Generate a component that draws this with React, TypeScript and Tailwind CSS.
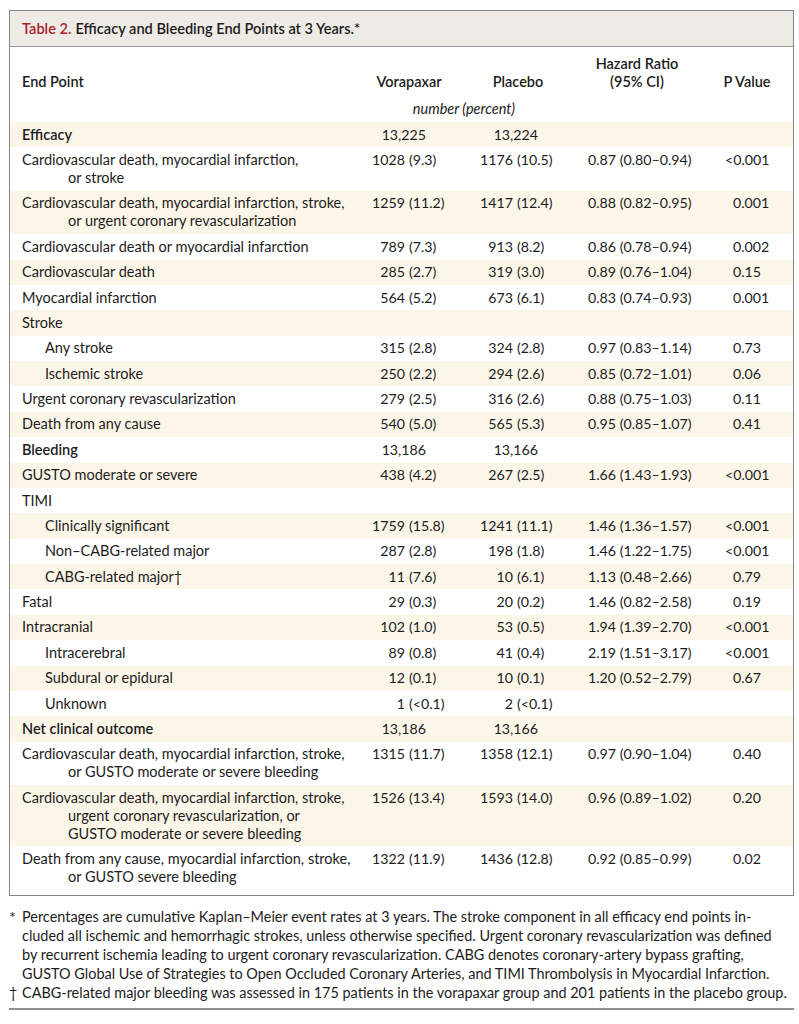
import React from "react"

type Row = {
  label: string[]
  bold?: boolean
  indent?: boolean
  v?: string
  p?: string
  hr?: string
  pv?: string
}

const rows: Row[] = [
  { label: ["Efficacy"], bold: true, v: "13,225", p: "13,224" },
  { label: ["Cardiovascular death, myocardial infarction,", "or stroke"], v: "1028 (9.3)", p: "1176 (10.5)", hr: "0.87 (0.80–0.94)", pv: "<0.001" },
  { label: ["Cardiovascular death, myocardial infarction, stroke,", "or urgent coronary revascularization"], v: "1259 (11.2)", p: "1417 (12.4)", hr: "0.88 (0.82–0.95)", pv: "0.001" },
  { label: ["Cardiovascular death or myocardial infarction"], v: "789 (7.3)", p: "913 (8.2)", hr: "0.86 (0.78–0.94)", pv: "0.002" },
  { label: ["Cardiovascular death"], v: "285 (2.7)", p: "319 (3.0)", hr: "0.89 (0.76–1.04)", pv: "0.15" },
  { label: ["Myocardial infarction"], v: "564 (5.2)", p: "673 (6.1)", hr: "0.83 (0.74–0.93)", pv: "0.001" },
  { label: ["Stroke"] },
  { label: ["Any stroke"], indent: true, v: "315 (2.8)", p: "324 (2.8)", hr: "0.97 (0.83–1.14)", pv: "0.73" },
  { label: ["Ischemic stroke"], indent: true, v: "250 (2.2)", p: "294 (2.6)", hr: "0.85 (0.72–1.01)", pv: "0.06" },
  { label: ["Urgent coronary revascularization"], v: "279 (2.5)", p: "316 (2.6)", hr: "0.88 (0.75–1.03)", pv: "0.11" },
  { label: ["Death from any cause"], v: "540 (5.0)", p: "565 (5.3)", hr: "0.95 (0.85–1.07)", pv: "0.41" },
  { label: ["Bleeding"], bold: true, v: "13,186", p: "13,166" },
  { label: ["GUSTO moderate or severe"], v: "438 (4.2)", p: "267 (2.5)", hr: "1.66 (1.43–1.93)", pv: "<0.001" },
  { label: ["TIMI"] },
  { label: ["Clinically significant"], indent: true, v: "1759 (15.8)", p: "1241 (11.1)", hr: "1.46 (1.36–1.57)", pv: "<0.001" },
  { label: ["Non–CABG-related major"], indent: true, v: "287 (2.8)", p: "198 (1.8)", hr: "1.46 (1.22–1.75)", pv: "<0.001" },
  { label: ["CABG-related major†"], indent: true, v: "11 (7.6)", p: "10 (6.1)", hr: "1.13 (0.48–2.66)", pv: "0.79" },
  { label: ["Fatal"], v: "29 (0.3)", p: "20 (0.2)", hr: "1.46 (0.82–2.58)", pv: "0.19" },
  { label: ["Intracranial"], v: "102 (1.0)", p: "53 (0.5)", hr: "1.94 (1.39–2.70)", pv: "<0.001" },
  { label: ["Intracerebral"], indent: true, v: "89 (0.8)", p: "41 (0.4)", hr: "2.19 (1.51–3.17)", pv: "<0.001" },
  { label: ["Subdural or epidural"], indent: true, v: "12 (0.1)", p: "10 (0.1)", hr: "1.20 (0.52–2.79)", pv: "0.67" },
  { label: ["Unknown"], indent: true, v: "1 (<0.1)", p: "2 (<0.1)" },
  { label: ["Net clinical outcome"], bold: true, v: "13,186", p: "13,166" },
  { label: ["Cardiovascular death, myocardial infarction, stroke,", "or GUSTO moderate or severe bleeding"], v: "1315 (11.7)", p: "1358 (12.1)", hr: "0.97 (0.90–1.04)", pv: "0.40" },
  { label: ["Cardiovascular death, myocardial infarction, stroke,", "urgent coronary revascularization, or", "GUSTO moderate or severe bleeding"], v: "1526 (13.4)", p: "1593 (14.0)", hr: "0.96 (0.89–1.02)", pv: "0.20" },
  { label: ["Death from any cause, myocardial infarction, stroke,", "or GUSTO severe bleeding"], v: "1322 (11.9)", p: "1436 (12.8)", hr: "0.92 (0.85–0.99)", pv: "0.02" },
]

// count like "1028 (9.3)" -> number right-aligned, parenthesis hanging to the right
const CountCell = ({ value, numW, totalW }: { value?: string; numW: string; totalW: string }) => {
  if (!value) return <div className={totalW} />
  const i = value.indexOf(" (")
  if (i < 0) {
    return (
      <div className={totalW}>
        <div className={numW === "w-[40px]" ? "w-[61px] text-right" : "w-[68px] text-right"}>{value}</div>
      </div>
    )
  }
  return (
    <div className={`${totalW} flex`}>
      <span className={`${numW} text-right shrink-0`}>{value.slice(0, i)}</span>
      <span className="ml-[4px] whitespace-nowrap">{value.slice(i + 1)}</span>
    </div>
  )
}

const PCell = ({ value }: { value?: string }) => (
  <div className="w-[73px] pl-[13px] whitespace-nowrap">
    {value?.startsWith("<") ? (
      <>
        <span className="-ml-[8px]">&lt;</span>
        {value.slice(1)}
      </>
    ) : (
      value
    )}
  </div>
)

export default function App() {
  return (
    <div
      className="w-[799px] h-[1024px] bg-white text-[#1c1c1c] overflow-hidden"
      style={{ fontFamily: "Lato, 'Open Sans', sans-serif" }}
    >
      <div className="ml-[9px] mt-[10px] w-[785px] border border-[#858585]">
        {/* Title band */}
        <div className="h-[36px] bg-[#eeebe6] border-b border-[#9a9a9a] flex items-center pl-[12px] text-[14.6px] font-semibold">
          <span className="text-[#a8232f]">Table 2.</span>
          <span className="ml-[4px]">Efficacy and Bleeding End Points at 3 Years.*</span>
        </div>

        {/* Column headers */}
        <div className="pt-[8px] flex items-end text-[14.5px] leading-[18px] font-semibold">
          <div className="w-[355px] pl-[12px]">End Point</div>
          <div className="w-[105px] pr-[17px] text-center">Vorapaxar</div>
          <div className="w-[110px] pr-[14px] text-center">Placebo</div>
          <div className="w-[140px] pr-[26px] text-center">
            Hazard Ratio
            <br />
            (95% CI)
          </div>
          <div className="w-[73px] pr-[19px] text-center">P Value</div>
        </div>
        <div className="flex mt-[9px] mb-[4px] text-[14.5px] leading-[18px] italic">
          <div className="w-[355px]" />
          <div className="w-[215px] pr-[17px] text-center">number (percent)</div>
        </div>

        {/* Body */}
        <div className="pb-[5px] text-[14.5px] leading-[18px]">
          {rows.map((r, idx) => (
            <div key={idx} className={`flex py-[3.7px] ${idx % 2 === 0 ? "bg-[#fcf6e9]" : "bg-white"}`}>
              <div className={`w-[355px] ${r.indent ? "pl-[35px]" : "pl-[12px]"} ${r.bold ? "font-semibold" : ""}`}>
                {r.label.map((line, j) => (
                  <div key={j} className={`whitespace-nowrap ${j > 0 ? "pl-[46px]" : ""}`}>
                    {line}
                  </div>
                ))}
              </div>
              <div className="flex text-[14.2px]">
                <CountCell value={r.v} numW="w-[40px]" totalW="w-[105px]" />
                <CountCell value={r.p} numW="w-[43px]" totalW="w-[110px]" />
                <div className="w-[140px] pl-[8px] whitespace-nowrap">{r.hr}</div>
                <PCell value={r.pv} />
              </div>
            </div>
          ))}
        </div>
      </div>

      {/* Footnotes */}
      <div className="mt-[11px] text-[14.45px] leading-[19px] whitespace-nowrap">
        <div className="flex">
          <div className="w-[22px] pl-[9px] text-[16px]">*</div>
          <div>
            <div>Percentages are cumulative Kaplan–Meier event rates at 3 years. The stroke component in all efficacy end points in-</div>
            <div>cluded all ischemic and hemorrhagic strokes, unless otherwise specified. Urgent coronary revascularization was defined</div>
            <div>by recurrent ischemia leading to urgent coronary revascularization. CABG denotes coronary-artery bypass grafting,</div>
            <div>GUSTO Global Use of Strategies to Open Occluded Coronary Arteries, and TIMI Thrombolysis in Myocardial Infarction.</div>
          </div>
        </div>
        <div className="flex">
          <div className="w-[22px] pl-[9px]">†</div>
          <div>CABG-related major bleeding was assessed in 175 patients in the vorapaxar group and 201 patients in the placebo group.</div>
        </div>
      </div>
      <div className="ml-[9px] mt-[6px] w-[785px] h-[2px] bg-[#8f8f8f]" />
    </div>
  )
}
